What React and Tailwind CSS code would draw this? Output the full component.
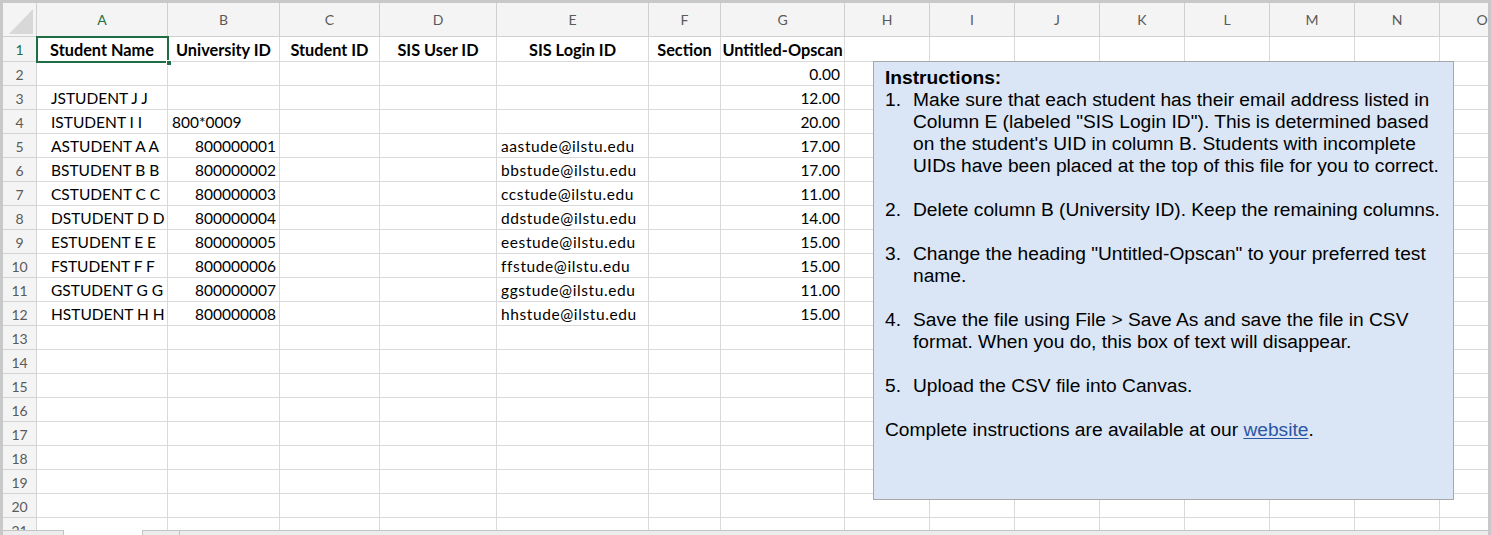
import React from 'react';

const COLS = ['A','B','C','D','E','F','G','H','I','J','K','L','M','N','O'];

const DATA = [
  ['Student Name','University ID','Student ID','SIS User ID','SIS Login ID','Section','Untitled-Opscan'],
  ['','','','','','','0.00'],
  ['JSTUDENT J J','','','','','','12.00'],
  ['ISTUDENT I I','800*0009','','','','','20.00'],
  ['ASTUDENT A A','800000001','','','aastude@ilstu.edu','','17.00'],
  ['BSTUDENT B B','800000002','','','bbstude@ilstu.edu','','17.00'],
  ['CSTUDENT C C','800000003','','','ccstude@ilstu.edu','','11.00'],
  ['DSTUDENT D D','800000004','','','ddstude@ilstu.edu','','14.00'],
  ['ESTUDENT E E','800000005','','','eestude@ilstu.edu','','15.00'],
  ['FSTUDENT F F','800000006','','','ffstude@ilstu.edu','','15.00'],
  ['GSTUDENT G G','800000007','','','ggstude@ilstu.edu','','11.00'],
  ['HSTUDENT H H','800000008','','','hhstude@ilstu.edu','','15.00'],
];

function cellClass(r, c, value) {
  let cls = 'border-r border-b border-[#d9d9d9] flex items-center whitespace-nowrap text-black bg-white';
  if (r === 1) return cls + ' justify-center font-bold text-[16.3px] pt-[3px]';
  cls += ' pt-[2px]';
  if (c === 0) return cls + ' pl-[14px] text-[15.5px]';
  if (c === 1) {
    if (value.includes('*')) return cls + ' pl-[4px] text-[15.5px]';
    return cls + ' justify-end pr-[3px] text-[15.5px]';
  }
  if (c === 4) return cls + ' pl-[4px] text-[15.5px] tracking-[0.6px]';
  if (c === 6) return cls + ' justify-end pr-[4px] text-[15.5px]';
  return cls + ' text-[15.5px]';
}

function Grid() {
  const cells = [];
  cells.push(
    <div key="corner" className="border-r border-b border-[#cfcfcf] bg-[#f4f4f4] relative">
      <svg width="34" height="34" className="absolute left-0 top-0">
        <polygon points="6,31 30,6 30,31" fill="#d8d8d8" />
      </svg>
    </div>
  );
  COLS.forEach((l, i) => {
    cells.push(
      <div
        key={'h' + l}
        className={
          'border-r border-b border-[#cfcfcf] bg-[#f4f4f4] flex items-center justify-center text-[14px] ' +
          (i === 0 ? 'text-[#1e7145]' : 'text-[#5a5a5a]')
        }
      >
        {l}
      </div>
    );
  });
  for (let r = 1; r <= 21; r++) {
    cells.push(
      <div
        key={'r' + r}
        className={
          'border-r border-b border-[#d4d4d4] bg-[#f4f4f4] flex items-center justify-center text-[14px] pt-[1px] ' +
          (r === 1 ? 'text-[#1e7145]' : 'text-[#5a5a5a]')
        }
      >
        {r}
      </div>
    );
    const row = DATA[r - 1] || [];
    for (let c = 0; c < COLS.length; c++) {
      const v = row[c] || '';
      cells.push(
        <div key={r + '-' + c} className={cellClass(r, c, v)}>
          {v}
        </div>
      );
    }
  }
  return (
    <div className="relative grid grid-cols-[34px_131px_112px_100px_117px_152px_72px_124px_repeat(7,85px)_85px] grid-rows-[34px_25px_repeat(20,24px)] w-max">
      {cells}
      <div className="absolute left-[33px] top-[33px] w-[133px] h-[27px] border-2 border-[#1f6e43] pointer-events-none">
        <div className="absolute right-[-5px] bottom-[-5px] w-[6px] h-[6px] bg-[#1f6e43] border border-white"></div>
      </div>
    </div>
  );
}

function Instructions() {
  const items = [
    'Make sure that each student has their email address listed in Column E (labeled "SIS Login ID"). This is determined based on the student\'s UID in column B. Students with incomplete UIDs have been placed at the top of this file for you to correct.',
    'Delete column B (University ID). Keep the remaining columns.',
    'Change the heading "Untitled-Opscan" to your preferred test name.',
    'Save the file using File > Save As and save the file in CSV format. When you do, this box of text will disappear.',
    'Upload the CSV file into Canvas.',
  ];
  return (
    <div className="absolute left-[873px] top-[61px] w-[581px] h-[439px] bg-[#dae6f5] border border-[#a8a8a8] pl-[11px] pr-[10px] pt-[5px] text-[19.2px] leading-[22px] text-black font-['Liberation_Sans',Arial,sans-serif]">
      <div className="font-bold">Instructions:</div>
      <ol>
        {items.map((t, i) => (
          <li key={i} className="flex mb-[22px]">
            <span className="w-[28px] shrink-0">{i + 1}.</span>
            <span>{t}</span>
          </li>
        ))}
      </ol>
      <p>
        Complete instructions are available at our{' '}
        <span className="text-[#2c55a5] underline underline-offset-2">website</span>.
      </p>
    </div>
  );
}

export default function App() {
  return (
    <div className="relative w-[1491px] h-[535px] overflow-hidden bg-[#c8c8c8] pt-[3px] px-[3px] flex flex-col font-['Lato',sans-serif]">
      <div className="flex-1 overflow-hidden bg-white">
        <Grid />
      </div>
      <div className="h-[5px] flex bg-[#ececec]">
        <div className="w-[60px] border-t border-[#c4c4c4]"></div>
        <div className="w-[80px] bg-white border-x border-[#c4c4c4]"></div>
        <div className="w-[37px] border-t border-r border-[#c4c4c4]"></div>
        <div className="flex-1 border-t border-[#c4c4c4]"></div>
      </div>
      <Instructions />
    </div>
  );
}
